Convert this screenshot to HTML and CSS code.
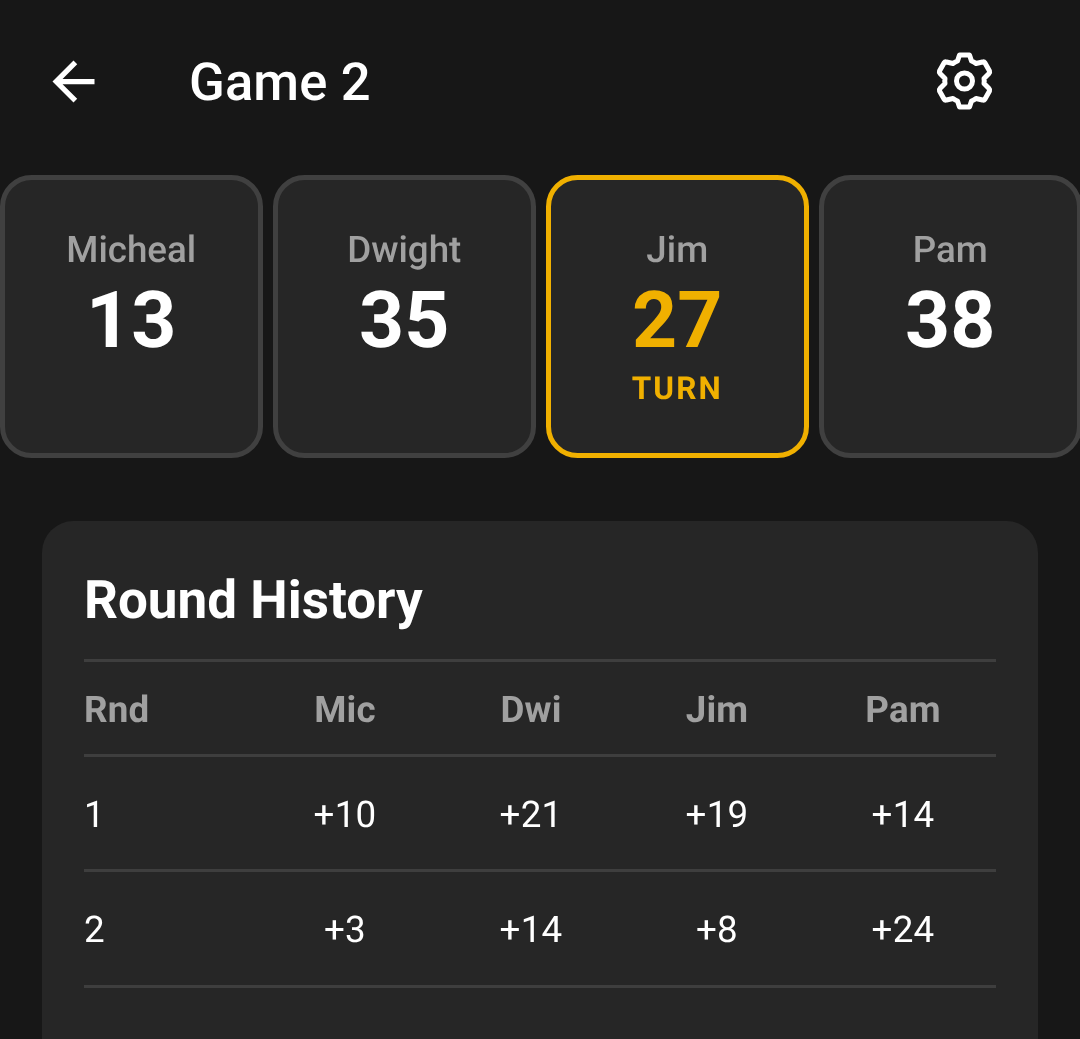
FILE: index.html
```html
<!DOCTYPE html>
<html lang="en">
<head>
<meta charset="utf-8">
<title>Game 2</title>
<link rel="stylesheet" href="styles.css">
</head>
<body>
<div class="screen">
  <header class="topbar">
    <button class="icon-btn back" aria-label="Back">
      <svg class="icon" viewBox="0 0 24 24"><path fill="#fff" d="M20 11H7.83l5.59-5.59L12 4l-8 8 8 8 1.41-1.41L7.83 13H20v-2z"/></svg>
    </button>
    <h1 class="title">Game 2</h1>
    <button class="icon-btn gear" aria-label="Settings">
      <svg class="icon" viewBox="0 0.5 63 63"><path fill="none" stroke="#fff" stroke-width="5" stroke-linejoin="round" d="M26.5 5.5H36.5L38.5 11.5Q41 12.5 43 14L49.5 12.5Q51 12 52 13.5L56.5 21.5Q57 23 56 24L51 29Q51.5 31.5 51 34L56 39Q57 40 56.5 41.5L52 49.5Q51 51 49.5 50.5L43 49Q41 50.5 38.5 51.5L36.5 57.5H26.5L24.5 51.5Q22 50.5 20 49L13.5 50.5Q12 51 11 49.5L6.5 41.5Q6 40 7 39L12 34Q11.5 31.5 12 29L7 24Q6 23 6.5 21.5L11 13.5Q12 12 13.5 12.5L20 14Q22 12.5 24.5 11.5Z"/><circle cx="31.5" cy="31.5" r="8" fill="none" stroke="#fff" stroke-width="5"/></svg>
    </button>
  </header>

  <section class="players">
    <div class="player"><div class="name">Micheal</div><div class="score">13</div></div>
    <div class="player"><div class="name">Dwight</div><div class="score">35</div></div>
    <div class="player active"><div class="name">Jim</div><div class="score">27</div><div class="turn">TURN</div></div>
    <div class="player"><div class="name">Pam</div><div class="score">38</div></div>
  </section>

  <section class="history">
    <h2 class="history-title">Round History</h2>
    <div class="row head"><span>Rnd</span><span>Mic</span><span>Dwi</span><span>Jim</span><span>Pam</span></div>
    <div class="row first"><span>1</span><span>+10</span><span>+21</span><span>+19</span><span>+14</span></div>
    <div class="row last"><span>2</span><span>+3</span><span>+14</span><span>+8</span><span>+24</span></div>
  </section>
</div>
</body>
</html>
```
FILE: styles.css
```css
* { box-sizing: border-box; }
html, body { margin: 0; padding: 0; background: #171717; }
body { font-family: Roboto, "Liberation Sans", sans-serif; color: #fff; text-rendering: geometricPrecision; }
.screen { width: 1080px; height: 1039px; overflow: hidden; will-change: transform; }

.topbar { display: flex; align-items: center; height: 163px; padding: 0 42px; }
.icon-btn { width: 63px; height: 63px; padding: 0; border: 0; background: none; flex: none; }
.icon { display: block; width: 63px; height: 63px; }
.gear { margin-right: 42px; }
.title { margin: 0 0 0 84px; padding-top: 1px; font-size: 52.5px; font-weight: 500; line-height: 63px; letter-spacing: 0.15px; flex: 1; }

.players { display: grid; grid-template-columns: repeat(4, 262.5px); gap: 10.5px; height: 283px; margin-top: 12px; }
.player { display: flex; flex-direction: column; align-items: center; background: #262626; border: 5px solid #404040; border-radius: 31.5px; padding-top: 46px; }
.player.active { border-color: #f0b000; }
.name { font-size: 36.75px; line-height: 48px; font-weight: 500; color: #a0a0a0; }
.score { font-size: 78.75px; line-height: 95px; font-weight: 700; }
.active .score { color: #f0b000; }
.turn { margin-top: -1px; font-size: 31.5px; line-height: 42px; font-weight: 700; letter-spacing: 2.1px; color: #f0b000; }

.history { margin: 63px 42px 0; padding: 42px 42px 0; background: #262626; border-radius: 31.5px; height: 600px; }
.history-title { margin: 0; font-size: 53px; line-height: 74px; font-weight: 700; height: 96px; }
.row { display: grid; grid-template-columns: 168px repeat(4, 186px); align-items: center; height: 115.5px; border-top: 3px solid #3e3e3e; font-size: 36.75px; letter-spacing: 0.2px; }
.row span { text-align: center; }
.row span:first-child { text-align: left; }
.row.head { height: 94.5px; padding-top: 3px; font-weight: 700; color: #a0a0a0; }
.row.first { padding-top: 3px; }
.row.last { border-bottom: 3px solid #3e3e3e; height: 118.5px; padding-top: 2px; }
```
